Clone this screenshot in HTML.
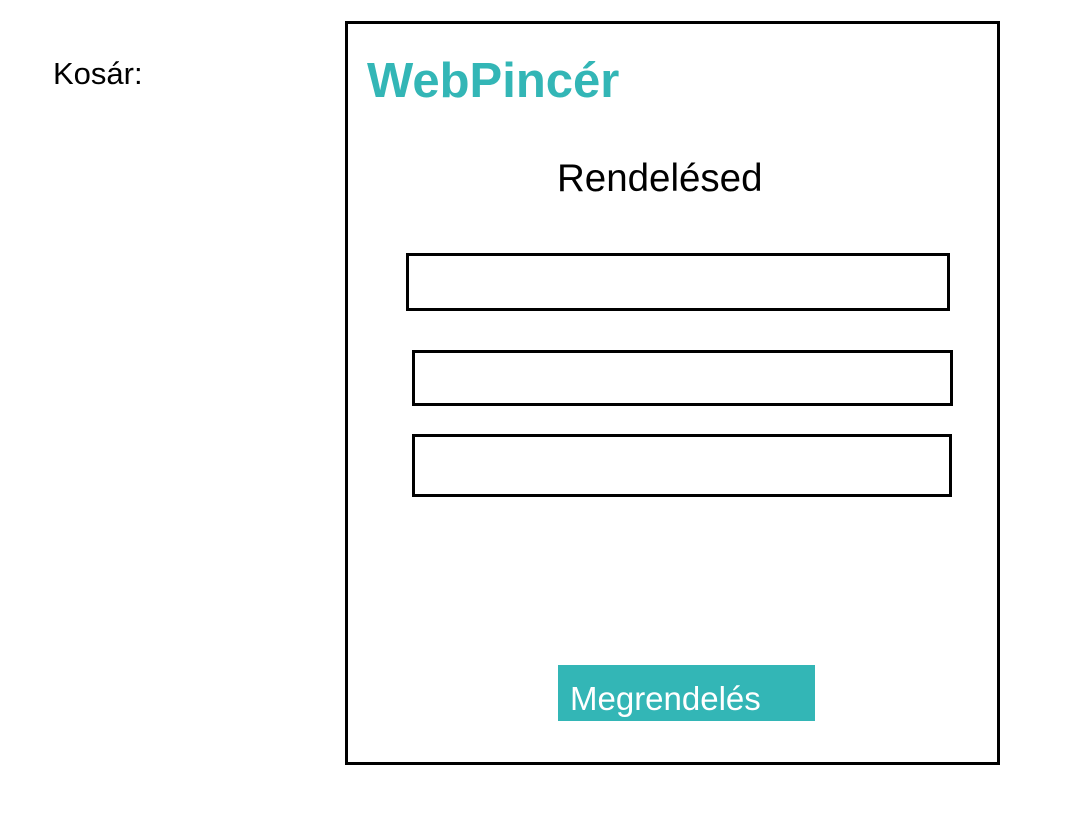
<!DOCTYPE html>
<html><head><meta charset="utf-8"><style>
body{margin:0;width:1070px;height:836px;background:#fff;position:relative;font-family:"Liberation Sans",sans-serif;overflow:hidden}
.a{position:absolute;line-height:1;white-space:nowrap}
.b{position:absolute;border:3px solid #000;box-sizing:border-box}
</style></head><body>
<div class="a" style="left:53px;top:58px;font-size:31px;color:#000">Kosár:</div>
<div class="b" style="left:345px;top:21px;width:655px;height:744px"></div>
<div class="a" style="left:367px;top:57px;font-size:49px;font-weight:bold;color:#33b6b6">WebPincér</div>
<div class="a" style="left:557px;top:160px;font-size:38.5px;color:#000">Rendelésed</div>
<div class="b" style="left:406px;top:253px;width:544px;height:58px"></div>
<div class="b" style="left:412px;top:350px;width:541px;height:56px"></div>
<div class="b" style="left:412px;top:434px;width:540px;height:63px"></div>
<div style="position:absolute;left:558px;top:665px;width:257px;height:56px;background:#33b6b6"></div>
<div class="a" style="left:570px;top:682px;font-size:33px;color:#fff">Megrendelés</div>
</body></html>
